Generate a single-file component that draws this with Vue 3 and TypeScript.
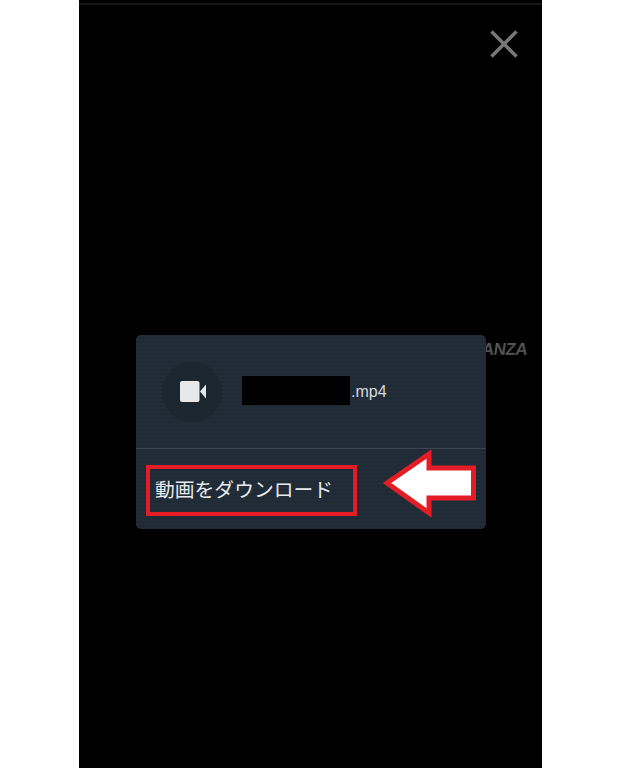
<script setup lang="ts">
const fileExt: string = '.mp4'
const action: string = '動画をダウンロード'
</script>

<template>
  <main class="page">
    <section class="viewer">
      <div class="top-line"></div>
      <svg class="close" width="30" height="30" viewBox="0 0 30 30" aria-label="閉じる">
        <path d="M2.5 2.5 L27.5 27.5 M27.5 2.5 L2.5 27.5" stroke="#787878" stroke-width="3.4" fill="none" />
      </svg>
      <span class="brand">FANZA</span>

      <div class="card">
        <div class="file">
          <div class="thumb">
            <svg class="camera" width="26" height="22" viewBox="0 0 26 22">
              <rect x="0" y="0" width="19.5" height="21" rx="2" fill="#e6e8ea" />
              <path d="M20 10.5 L26 3.5 V17.5 Z" fill="#e6e8ea" />
            </svg>
          </div>
          <div class="name">
            <span class="mask"></span>
            <span class="ext">{{ fileExt }}</span>
          </div>
        </div>
        <div class="action-row">
          <div class="action">{{ action }}</div>
          <svg class="arrow" width="96" height="70" viewBox="0 0 96 70">
            <path d="M5 33 L47 4 V18 H91.5 V48 H47 V63 Z" fill="#fff" stroke="#e31c25" stroke-width="5" stroke-linejoin="miter" />
          </svg>
        </div>
      </div>
    </section>
  </main>
</template>

<style scoped>
.page {
  width: 640px;
  height: 768px;
  background: #fff;
  padding-left: 79px;
  box-sizing: border-box;
  overflow: hidden;
}

.viewer {
  position: relative;
  width: 463px;
  height: 768px;
  background: #000;
  padding: 335px 0 0 57px;
  box-sizing: border-box;
}

.top-line {
  position: absolute;
  top: 3px;
  left: 0;
  right: 0;
  height: 2px;
  background: #18181a;
}

.close {
  position: absolute;
  top: 29px;
  left: 410px;
}

.brand {
  position: absolute;
  top: 340px;
  left: 394px;
  font: 700 17px/20px "Liberation Sans", sans-serif;
  transform: skewX(-8deg);
  letter-spacing: -0.5px;
  color: #555;
  filter: blur(0.6px);
}

.card {
  position: relative;
  width: 350px;
  height: 194px;
  border-radius: 5px;
  background: repeating-linear-gradient(180deg, #212d39 0 2px, #1f2a35 2px 4px);
  display: flex;
  flex-direction: column;
  font-family: "Noto Sans CJK JP", "Liberation Sans", sans-serif;
}

.file {
  height: 114px;
  flex: none;
  display: flex;
  align-items: flex-start;
  gap: 20px;
  padding: 27px 0 0 26px;
  box-sizing: border-box;
  border-bottom: 1px solid #3a4752;
}

.thumb {
  width: 60px;
  height: 60px;
  border-radius: 50%;
  background: #1b262e;
  display: flex;
  align-items: center;
  justify-content: center;
}

.camera {
  margin-left: 2px;
}

.name {
  display: flex;
  align-items: center;
  height: 29px;
  margin-top: 14px;
}

.mask {
  width: 108px;
  height: 29px;
  background: #000;
}

.ext {
  font-family: "Liberation Sans", sans-serif;
  font-size: 16px;
  color: #d6dade;
  margin-top: 2px;
  margin-left: 1px;
}

.action-row {
  flex: 1;
  position: relative;
  padding: 16px 0 0 10px;
}

.action {
  width: 211px;
  height: 51px;
  box-sizing: border-box;
  border: 4px solid #e31c25;
  padding-left: 5px;
  font-size: 19.8px;
  line-height: 40px;
  color: #e8ebee;
  white-space: nowrap;
}

.arrow {
  position: absolute;
  top: 1px;
  left: 246px;
}
</style>
